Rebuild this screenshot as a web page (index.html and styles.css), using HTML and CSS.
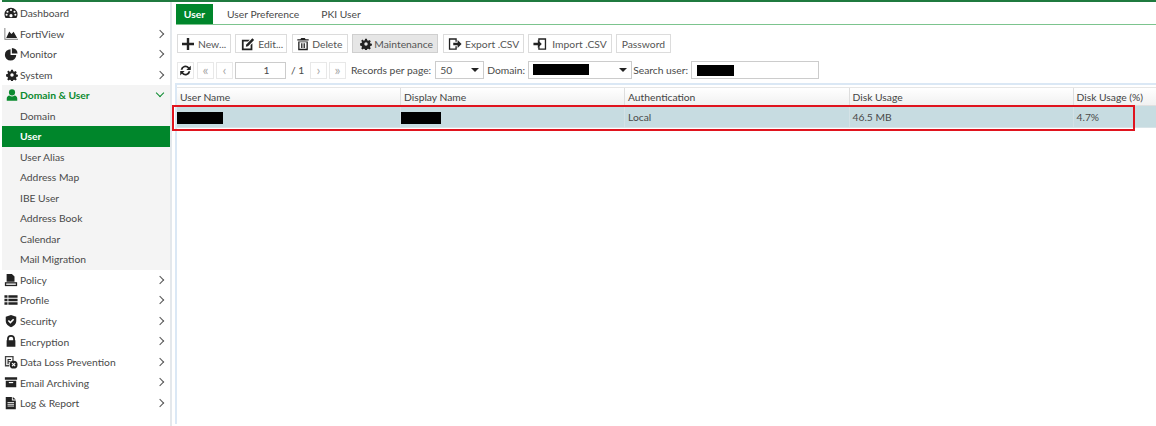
FILE: index.html
```html
<!DOCTYPE html>
<html lang="en">
<head>
<meta charset="utf-8">
<title>Domain &amp; User</title>
<link rel="stylesheet" href="styles.css">
</head>
<body>
<div class="app">
  <nav class="side">
    <div class="item"><svg class="ic" viewBox="0 0 16 16"><path d="M8 2a7.500 7.500 0 0 0-7.500 7.500c0 1.600.5 3 1.300 4.200h12.400c.8-1.200 1.300-2.600 1.300-4.200A7.500 7.500 0 0 0 8 2z"/><circle cx="8" cy="4.500" r="1.200" fill="#fff"/><circle cx="4" cy="6.500" r="1.200" fill="#fff"/><circle cx="12" cy="6.500" r="1.200" fill="#fff"/><circle cx="3" cy="10" r="1.200" fill="#fff"/><circle cx="13" cy="10" r="1.200" fill="#fff"/><circle cx="8" cy="11" r="1.800" fill="#fff"/></svg><span>Dashboard</span></div>
    <div class="item"><svg class="ic wide" viewBox="0 0 16 16"><path d="M.5 1v13.500H16v-1H1.500V1z" fill="#777"/><path d="M2.500 12.500 6 5l2.500 3L11 5.500l4 7z"/></svg><span>FortiView</span><i class="chev"></i></div>
    <div class="item"><svg class="ic" viewBox="0 0 16 16"><path d="M7.500 2.500a6.500 6.500 0 1 0 6.500 6.500H7.500z"/><path d="M9 1v6.500h6.500A6.500 6.500 0 0 0 9 1z"/></svg><span>Monitor</span><i class="chev"></i></div>
    <div class="item"><svg class="ic gear" viewBox="0 0 16 16"><use href="#gear"/></svg><span>System</span><i class="chev"></i></div>
    <div class="item open"><svg class="ic" viewBox="0 0 16 16"><circle cx="8" cy="5" r="3.500"/><path d="M2 14.500V12c0-2 1.500-3.500 3-3.500 1 .8 2 1.200 3 1.200s2-.4 3-1.200c1.500 0 3 1.500 3 3.500v2.500z"/></svg><span>Domain &amp; User</span><i class="chev down"></i></div>
    <div class="item sub shade"><span>Domain</span></div>
    <div class="item sub active"><span>User</span></div>
    <div class="item sub shade"><span>User Alias</span></div>
    <div class="item sub shade"><span>Address Map</span></div>
    <div class="item sub shade"><span>IBE User</span></div>
    <div class="item sub shade"><span>Address Book</span></div>
    <div class="item sub shade"><span>Calendar</span></div>
    <div class="item sub shade"><span>Mail Migration</span></div>
    <div class="item"><svg class="ic" viewBox="0 0 16 16"><path d="M3 1h6l3 3v6H3z"/><path d="M1 10.500h14V15H1z"/><path d="M2.500 12h11v1.500h-11z" fill="#fff"/></svg><span>Policy</span><i class="chev"></i></div>
    <div class="item"><svg class="ic" viewBox="0 0 16 16"><path d="M.5 2.500H4v3H.5zM5 2.500h10.500v3H5zM.5 6.500H4v3H.5zM5 6.500h10.500v3H5zM.5 10.500H4v3H.5zM5 10.500h10.500v3H5z"/></svg><span>Profile</span><i class="chev"></i></div>
    <div class="item"><svg class="ic" viewBox="0 0 16 16"><path d="M8 1 2 3v5c0 3.500 3 6 6 7 3-1 6-3.500 6-7V3z"/><path d="m5 7.500 2.300 2.300L11 6" fill="none" stroke="#fff" stroke-width="1.800"/></svg><span>Security</span><i class="chev"></i></div>
    <div class="item"><svg class="ic" viewBox="0 0 16 16"><path d="M3.500 7V5.500a4.500 4.500 0 0 1 9 0V7h.5v7.500H3V7zm2 0h5V5.500a2.500 2.500 0 0 0-5 0z"/></svg><span>Encryption</span><i class="chev"></i></div>
    <div class="item"><svg class="ic" viewBox="0 0 16 16"><path d="M1 1h10v6H9.500V2.500h-7v9H6V13H1z" fill="#444"/><path d="M4 4.500h4v1.300H5.300V7h2.200v1.200H5.300v2.300H4z"/><circle cx="11" cy="11" r="4.500"/><path d="m9.200 9.200 3.600 3.600m0-3.600-3.600 3.600" stroke="#fff" stroke-width="1.300"/></svg><span>Data Loss Prevention</span><i class="chev"></i></div>
    <div class="item"><svg class="ic" viewBox="0 0 16 16"><path d="M1 2.500h14v3H1zM2 6.500h12V14H2z"/><path d="M5.500 8h5v1.300h-5z" fill="#fff"/></svg><span>Email Archiving</span><i class="chev"></i></div>
    <div class="item"><svg class="ic" viewBox="0 0 16 16"><path d="M2 1h7v4h4.500v10H2z"/><path d="M10 1l3.500 3H10z"/><path d="M4 7.500h7.500M4 9.500h7.500M4 11.500h7.500" stroke="#fff"/></svg><span>Log &amp; Report</span><i class="chev"></i></div>
  </nav>
  <main class="main">
    <div class="tabs">
      <span class="tab on">User</span>
      <span class="tab">User Preference</span>
      <span class="tab">PKI User</span>
    </div>
    <div class="toolbar">
      <button class="btn b-new"><svg class="bi big" viewBox="0 0 14 14"><path d="M5.800 1h2.400v4.800H13v2.400H8.200V13H5.800V8.200H1V5.800h4.800z"/></svg>New...</button>
      <button class="btn b-edit"><svg class="bi" viewBox="0 0 16 16"><path d="M1 3h9L8 5H3v8h8V9l2-2v8H1z"/><path d="M6 8.500l7-7 2 2-7 7-2.500.5z"/></svg>Edit...</button>
      <button class="btn b-del"><svg class="bi" viewBox="0 0 16 16"><path d="M6 1h4l1 1.500h3.500V4h-13V2.500H5zM2.500 5h11v10h-11zM4 6v7.500h8V6z"/><path d="M5.700 7h1v5.500h-1zM7.500 7h1v5.500h-1zM9.300 7h1v5.500h-1z"/></svg>Delete</button>
      <button class="btn pressed"><svg class="bi small" viewBox="0 0 16 16"><use href="#gear"/></svg>Maintenance</button>
      <button class="btn b-exp"><svg class="bi" viewBox="0 0 16 16"><path d="M1 1.500h9v4H8.500V3h-6v10h6v-2.500H10v4H1z"/><path d="M6 6.500h5v-3L15.500 8 11 12.500v-3H6z"/></svg>Export .CSV</button>
      <button class="btn b-imp"><svg class="bi" viewBox="0 0 16 16"><path d="M6 1.500h9v13H6v-4h1.500V13h6V3h-6v2.500H6z"/><path d="M.5 6.500h5v-3L10 8l-4.500 4.500v-3h-5z"/></svg>Import .CSV</button>
      <button class="btn">Password</button>
    </div>
    <div class="pager">
      <span class="pg dark"><svg viewBox="0 0 16 16" class="refresh"><path d="M2 7a6 6 0 0 1 10.500-3l2-2v5.500H9l2-2A3.800 3.800 0 0 0 4.300 7zM14 9a6 6 0 0 1-10.500 3l-2 2V8.500H7l-2 2A3.800 3.800 0 0 0 11.700 9z"/></svg></span>
      <span class="pg muted first">«</span>
      <span class="pg muted">‹</span>
      <span class="pageinput">1</span>
      <span class="of">/ 1</span>
      <span class="pg muted">›</span>
      <span class="pg muted">»</span>
      <label class="lab">Records per page:</label>
      <span class="sel s1">50<i class="caret"></i></span>
      <label class="lab">Domain:</label>
      <span class="sel s2"><b class="mask m1"></b><i class="caret"></i></span>
      <label class="lab tight">Search user:</label>
      <span class="search"><b class="mask m2"></b></span>
    </div>
    <div class="grid">
      <div class="row head">
        <div class="cell c1">User Name</div>
        <div class="cell c2">Display Name</div>
        <div class="cell c3">Authentication</div>
        <div class="cell c4">Disk Usage</div>
        <div class="cell c5">Disk Usage (%)</div>
      </div>
      <div class="row sel-row">
        <div class="cell c1"><b class="mask m3"></b></div>
        <div class="cell c2"><b class="mask m4"></b></div>
        <div class="cell c3">Local</div>
        <div class="cell c4">46.5 MB</div>
        <div class="cell c5">4.7%</div>
      </div>
    </div>
  </main>
</div>
<div class="redbox"></div>
<svg class="defs" width="0" height="0"><defs><path id="gear" d="M6.800 1h2.400l.4 2 1.400.6 1.700-1.100 1.700 1.700-1.100 1.700.6 1.400 2 .4v2.400l-2 .4-.6 1.400 1.100 1.700-1.700 1.700-1.700-1.100-1.400.6-.4 2H6.800l-.4-2-1.400-.6-1.700 1.100-1.700-1.700 1.100-1.700-.6-1.400-2-.4V7.100l2-.4.6-1.400-1.100-1.700 1.700-1.700L5 3.500l1.400-.6zM8 5.700a2.300 2.300 0 1 0 0 4.600 2.300 2.300 0 0 0 0-4.600z"/></defs></svg>
</body>
</html>
```
FILE: styles.css
```css
* { box-sizing: border-box; }
html, body { margin: 0; padding: 0; height: 100%; }
body {
  width: 1156px;
  height: 426px;
  overflow: hidden;
  background: #fff;
  font-family: Lato, "Open Sans", sans-serif;
  font-size: 10.3px;
  color: #4a4a4a;
  position: relative;
}
.app {
  display: flex;
  height: 426px;
  margin-left: 2px;
  border-top: 2px solid #1f7a3f;
}
.side {
  width: 170px;
  flex: none;
  padding-top: 1px;
  border-right: 2px solid #e4e8ec;
  height: 424px;
}
.item {
  height: 20.53px;
  display: flex;
  align-items: center;
  padding-left: 18px;
  position: relative;
  white-space: nowrap;
}
.ic {
  position: absolute;
  left: 2px;
  top: 3px;
  width: 14px;
  height: 14px;
  fill: #222;
}
.ic.wide { left: 1px; width: 16px; }
.ic.gear { left: 4px; top: 4px; width: 12px; height: 12px; }
.open { background: #f4f4f4; color: #0b8a2f; font-weight: 700; }
.open .ic { fill: #0b8a2f; left: 3px; }
.shade { background: #f4f4f4; }
.active { background: #00862b; color: #fff; font-weight: 700; }
.chev {
  position: absolute;
  right: 7px;
  top: 7px;
  width: 6px;
  height: 6px;
  border-top: 1px solid #555;
  border-right: 1px solid #555;
  transform: rotate(45deg);
}
.chev.down {
  top: 5px;
  border-color: #0b8a2f;
  transform: rotate(135deg);
}
.main { flex: 1; padding-left: 3px; min-width: 0; }
.tabs {
  display: flex;
  height: 21px;
  margin-top: 2px;
  margin-left: 1px;
  border-bottom: 1px solid #7cc48e;
}
.tab {
  padding: 0 11px;
  line-height: 20px;
  height: 20px;
}
.tab:nth-child(2) { padding-left: 14px; }
.tab.on {
  background: #00862b;
  color: #fff;
  font-weight: 700;
  width: 37px;
  padding: 0;
  text-align: center;
}
.toolbar {
  display: flex;
  gap: 4px;
  margin-top: 9px;
  padding-left: 2px;
}
.btn {
  height: 19px;
  padding: 0 5px;
  display: flex;
  align-items: center;
  gap: 3px;
  background: #fff;
  border: 1px solid #dcdcdc;
  font: inherit;
  color: #555;
  white-space: nowrap;
}
.btn.pressed { background: #e6e6e6; border-color: #cfcfcf; padding: 0 4px 0 7px; gap: 2px; }
.b-new { padding: 0 4px 0 3px; }
.b-edit { padding: 0 3px 0 5px; }
.b-del { padding: 0 5px 0 3px; gap: 2px; margin-left: 1px; }
.b-exp { padding: 0 4px 0 4px; gap: 3px; margin-left: 1px; }
.b-imp { padding: 0 4px 0 4px; gap: 5px; }
.bi { width: 14px; height: 14px; fill: #222; flex: none; }
.big { width: 14px; height: 14px; }
.small { width: 12px; height: 12px; }
.pager {
  display: flex;
  align-items: center;
  margin-top: 8px;
  height: 18px;
  padding-left: 2px;
}
.pg {
  width: 17px;
  height: 17px;
  border: 1px solid #e8e8e8;
  display: flex;
  align-items: center;
  justify-content: center;
  margin-right: 2px;
  font-size: 14px;
  line-height: 1;
  flex: none;
}
.pg.muted { color: #aaa; }
.pg.first { margin-left: 1px; }
.refresh { width: 13px; height: 13px; fill: #222; }
.pageinput {
  width: 51px;
  height: 17px;
  border: 1px solid #ccc;
  text-align: center;
  line-height: 15px;
  padding-left: 12px;
}
.of { margin: 0 5px 0 5px; white-space: nowrap; width: 14px; }
.lab { margin-left: 3px; white-space: nowrap; }
.lab.tight { margin-left: 1px; }
.sel {
  position: relative;
  height: 18px;
  border: 1px solid #ccc;
  margin-left: 4px;
  line-height: 16px;
  padding-left: 4px;
  display: block;
  flex: none;
}
.s1 { width: 49px; }
.s2 { width: 104px; margin-left: 3px; }
.caret {
  position: absolute;
  right: 4px;
  top: 6px;
  border-left: 4px solid transparent;
  border-right: 4px solid transparent;
  border-top: 4px solid #222;
}
.search {
  width: 128px;
  height: 18px;
  border: 1px solid #ccc;
  margin-left: 3px;
  display: block;
  padding: 3px 5px;
  flex: none;
}
.mask { display: block; background: #000; }
.m1 { width: 56px; height: 11px; margin-top: 2px; }
.m2 { width: 37px; height: 11px; }
.m3 { width: 46px; height: 12px; margin: 3px 0 0 -3px; }
.m4 { width: 40px; height: 12px; margin: 3px 0 0 -3px; }
.grid {
  margin-top: 4px;
  border-top: 2px solid #dbe8f5;
  border-left: 2px solid #dbe8f5;
  height: 341px;
  padding-top: 2px;
}
.row { display: flex; }
.head {
  height: 19px;
  background: linear-gradient(#fff, #f1f1f1);
  border-top: 1px solid #e6e6e6;
  border-bottom: 1px solid #e0e0e0;
  color: #444;
}
.sel-row { height: 22px; background: #c7dce1; border-bottom: 1px solid #d8e4e8; }
.cell {
  padding-left: 3px;
  display: flex;
  align-items: center;
  white-space: nowrap;
  border-right: 1px solid #dedede;
}
.sel-row .cell { border-right-color: #d4e2e6; }
.c1 { width: 224px; }
.c2 { width: 224px; }
.c3 { width: 224.5px; }
.c4 { width: 224px; }
.c5 { flex: 1; border-right: 0; }
.redbox {
  position: absolute;
  left: 172px;
  top: 105px;
  width: 963px;
  height: 26px;
  border: 2px solid #e0141e;
  pointer-events: none;
}
.defs { position: absolute; }
```
